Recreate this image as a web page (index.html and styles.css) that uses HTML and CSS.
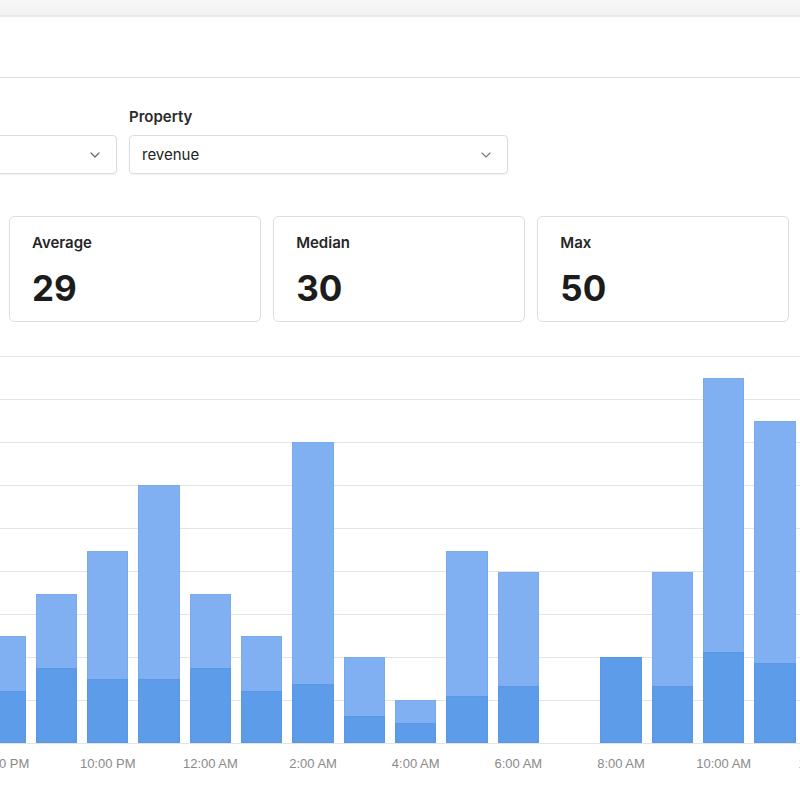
FILE: index.html
```html
<!DOCTYPE html>
<html lang="en">
<head>
<meta charset="utf-8">
<title>Revenue stats</title>
<link rel="stylesheet" href="styles.css">
</head>
<body>
  <div class="topbar"></div>
  <header class="header"></header>

  <section class="filters">
    <div class="field">
      <div class="field-label"></div>
      <div class="select">
        <span class="select-value"></span>
        <svg class="chev" viewBox="0 0 10 6" width="10" height="6"><path d="M1 1l4 4 4-4" fill="none" stroke="#666" stroke-width="1.2" stroke-linecap="round" stroke-linejoin="round"/></svg>
      </div>
    </div>
    <div class="field">
      <div class="field-label">Property</div>
      <div class="select">
        <span class="select-value">revenue</span>
        <svg class="chev" viewBox="0 0 10 6" width="10" height="6"><path d="M1 1l4 4 4-4" fill="none" stroke="#777" stroke-width="1.1" stroke-linecap="round" stroke-linejoin="round"/></svg>
      </div>
    </div>
  </section>

  <section class="cards">
    <div class="card"><div class="card-label">Average</div><div class="card-value">29</div></div>
    <div class="card"><div class="card-label">Median</div><div class="card-value">30</div></div>
    <div class="card"><div class="card-label">Max</div><div class="card-value">50</div></div>
  </section>

  <section class="chart">
    <div class="plot">
      <div class="col"><div class="bar" style="height:107px"><div class="bar-inner" style="height:52px"></div></div></div>
      <div class="col"><div class="bar" style="height:149px"><div class="bar-inner" style="height:75px"></div></div></div>
      <div class="col"><div class="bar" style="height:192px"><div class="bar-inner" style="height:64px"></div></div></div>
      <div class="col"><div class="bar" style="height:258px"><div class="bar-inner" style="height:64px"></div></div></div>
      <div class="col"><div class="bar" style="height:149px"><div class="bar-inner" style="height:75px"></div></div></div>
      <div class="col"><div class="bar" style="height:107px"><div class="bar-inner" style="height:52px"></div></div></div>
      <div class="col"><div class="bar" style="height:301px"><div class="bar-inner" style="height:59px"></div></div></div>
      <div class="col"><div class="bar" style="height:86px"><div class="bar-inner" style="height:27px"></div></div></div>
      <div class="col"><div class="bar" style="height:43px"><div class="bar-inner" style="height:20px"></div></div></div>
      <div class="col"><div class="bar" style="height:192px"><div class="bar-inner" style="height:47px"></div></div></div>
      <div class="col"><div class="bar" style="height:171px"><div class="bar-inner" style="height:57px"></div></div></div>
      <div class="col"></div>
      <div class="col"><div class="bar" style="height:86px"><div class="bar-inner" style="height:86px"></div></div></div>
      <div class="col"><div class="bar" style="height:171px"><div class="bar-inner" style="height:57px"></div></div></div>
      <div class="col"><div class="bar" style="height:365px"><div class="bar-inner" style="height:91px"></div></div></div>
      <div class="col"><div class="bar" style="height:322px"><div class="bar-inner" style="height:80px"></div></div></div>
      <div class="col"><div class="bar" style="height:150px"><div class="bar-inner" style="height:60px"></div></div></div>
    </div>
    <div class="axis">
      <div class="tick">8:00 PM</div>
      <div class="tick"></div>
      <div class="tick">10:00 PM</div>
      <div class="tick"></div>
      <div class="tick">12:00 AM</div>
      <div class="tick"></div>
      <div class="tick">2:00 AM</div>
      <div class="tick"></div>
      <div class="tick">4:00 AM</div>
      <div class="tick"></div>
      <div class="tick">6:00 AM</div>
      <div class="tick"></div>
      <div class="tick">8:00 AM</div>
      <div class="tick"></div>
      <div class="tick">10:00 AM</div>
      <div class="tick"></div>
      <div class="tick">12:00 PM</div>
    </div>
  </section>
</body>
</html>
```

FILE: styles.css
```css
html, body {
  margin: 0;
  padding: 0;
  background: #ffffff;
  overflow: hidden;
  width: 800px;
  height: 800px;
}
body {
  font-family: "Inter", "Liberation Sans", sans-serif;
  color: #1f1f1f;
}
.topbar {
  height: 15px;
  background: linear-gradient(#f7f7f7, #f2f2f2);
  border-bottom: 2px solid #e9e9e9;
}
.header {
  height: 60px;
  border-bottom: 1px solid #dedede;
}
.filters {
  display: flex;
  gap: 12px;
  margin-left: -262px;
  margin-top: 30px;
}
.field {
  width: 379px;
  display: flex;
  flex-direction: column;
  gap: 9px;
}
.field-label {
  font-size: 15px;
  font-weight: 600;
  line-height: 18px;
  height: 18px;
  color: #2a2a2a;
}
.select {
  height: 37px;
  border: 1px solid #dcdcdc;
  border-radius: 4px;
  box-shadow: 0 1px 2px rgba(0,0,0,0.06);
  display: flex;
  align-items: center;
  justify-content: space-between;
  padding: 0 16px 0 12px;
}
.select-value {
  font-size: 15px;
  color: #222;
}
.chev { display: block; }
.cards {
  display: grid;
  grid-template-columns: repeat(3, 1fr);
  gap: 12.5px;
  margin: 42px 0 0 9px;
  width: 780px;
}
.card {
  border: 1px solid #dedede;
  border-radius: 5px;
  padding: 17px 22px 13px;
  height: 74px;
}
.card-label {
  font-size: 15px;
  font-weight: 600;
  line-height: 18px;
  color: #262626;
}
.card-value {
  margin-top: 16px;
  font-size: 35px;
  font-weight: 700;
  line-height: 40px;
  color: #1c1c1c;
}
.chart {
  margin-top: 34px;
}
.plot {
  height: 387px;
  border-bottom: 1px solid #e4e4e4;
  background: repeating-linear-gradient(to bottom, #e4e4e4 0, #e4e4e4 1px, transparent 1px, transparent 43px);
  display: flex;
  align-items: flex-end;
  gap: 10px;
  margin-left: -15.6px;
}
.col {
  width: 41.33px;
  flex: none;
  display: flex;
  align-items: flex-end;
  height: 100%;
}
.bar {
  width: 100%;
  background: #80b0f1;
  box-shadow: inset 0 0 0 1px rgba(95,150,228,0.22);
  display: flex;
  flex-direction: column;
  justify-content: flex-end;
}
.bar-inner {
  background: #5c9ce9;
  box-shadow: inset 0 0 0 1px rgba(80,140,225,0.2);
}
.axis {
  display: flex;
  gap: 10px;
  margin-left: -15.6px;
  margin-top: 12px;
}
.tick {
  width: 41.33px;
  flex: none;
  display: flex;
  justify-content: center;
  white-space: nowrap;
  font-family: "Liberation Sans", "Inter", sans-serif;
  font-size: 13px;
  line-height: 16px;
  color: #8a8a8a;
}
```
